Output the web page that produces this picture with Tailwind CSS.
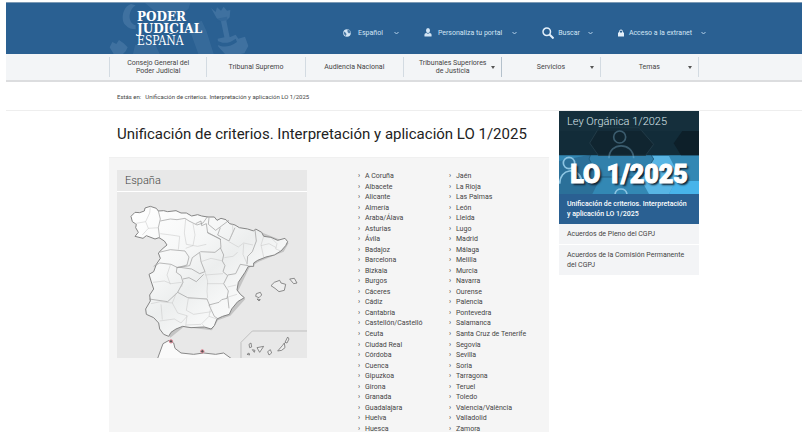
<!DOCTYPE html>
<html lang="es">
<head>
    <meta charset="UTF-8">
    <meta name="viewport" content="width=device-width, initial-scale=1.0">
    <title>Unificación de criterios. Interpretación y aplicación LO 1/2025</title>
    <script src="https://cdn.jsdelivr.net/npm/@tailwindcss/browser@4"></script>
</head>
<body class="bg-white font-[Roboto,sans-serif] text-[#444] h-screen overflow-hidden">
    <div class="flex flex-col h-full pl-[6px] pt-[2px]">

        <!-- Header -->
        <header class="shrink-0 bg-[#2a6092] border-t border-[#7c9ab5] overflow-hidden">
            <div class="relative w-full max-w-[590px] mx-auto h-[51px] flex items-center">
                <svg class="absolute left-0 top-0 w-[140px] h-[51px]" viewBox="12 9 420 153" fill="#4b7ba8" opacity=".65">
                    <path d="M78 12C52 20 46 62 62 76c8 10 18 12 30 12v-12C78 72 72 58 74 44c2-12 8-22 18-28z"/>
                    <path d="M120 9h136l-6 18-26 18-20 4-20 26-12-2 8-30-34-12z" opacity=".6"/>
                    <path d="M318 24l14 12 4-14 12 10 8-12 10 12 10-2-2 22-10 10 10 50 18-8 8 12 20-6 10 28-12 22-22 4-36-2-20-22-2-24 20-4-10-48-12-8z"/>
                    <path d="M14 142l8-16 12 6 8-12 14 10 12 12-6 12-8 8H26z"/>
                    <path d="M84 162l6-26 30-8 30 4 14 30z" opacity=".6"/>
                    <path d="M250 78l40-16 14 30 22 70h-46z" opacity=".6"/>
                    <path d="M334 120c16 12 38 12 58-4l4 10c-22 16-44 18-62 6z" fill="#2a6092"/>
                    <path d="M334 56l32-6 2 10-32 6z" fill="#2a6092" opacity=".5"/>
                </svg>
                <a href="#" class="relative shrink-0 ml-[28px] w-[206px] font-['DejaVu_Serif',serif] text-[12px] leading-[12px] text-white">
                    <span class="block font-bold">PODER</span>
                    <span class="block font-bold">JUDICIAL</span>
                    <span class="block font-['DejaVu_Serif_Condensed','DejaVu_Serif',serif]">ESPAÑA</span>
                </a>
                <div class="flex items-center gap-[25px] pt-[8px] text-[7px] leading-[10px] text-[#d3e5f5] whitespace-nowrap">
                    <button class="flex items-center gap-[7px]">
                        <svg class="w-[8px] h-[8px]" viewBox="0 0 16 16"><circle cx="8" cy="8" r="7.5" fill="#d3e5f5"/><path d="M9 1l5 2 1 4-3 2-3-3zM2 5l4 3 1 3-2 3-3-4z" fill="#2a6092" opacity=".8"/></svg>
                        Español
                        <svg class="w-[5px] h-[4px] ml-1" viewBox="0 0 10 8"><path d="M1 2l4 4 4-4" fill="none" stroke="#b4d0e8" stroke-width="2"/></svg>
                    </button>
                    <button class="flex items-center gap-[6px]">
                        <svg class="w-[8px] h-[9px]" viewBox="0 0 16 18" fill="#d3e5f5"><ellipse cx="8" cy="5" rx="4" ry="5"/><path d="M1 17c-1-5 1-7 4-7 2 2 4 2 6 0 3 0 5 2 4 7z"/></svg>
                        Personaliza tu portal
                        <svg class="w-[5px] h-[4px] ml-1" viewBox="0 0 10 8"><path d="M1 2l4 4 4-4" fill="none" stroke="#b4d0e8" stroke-width="2"/></svg>
                    </button>
                    <button class="flex items-center gap-[4px]">
                        <svg class="w-[12px] h-[12px]" viewBox="0 0 24 24" fill="none" stroke="#e3f0fb" stroke-width="3"><circle cx="9.500" cy="9.500" r="7.500"/><path d="M15 15l8 8" stroke-width="4"/></svg>
                        Buscar
                        <svg class="w-[5px] h-[4px] ml-1" viewBox="0 0 10 8"><path d="M1 2l4 4 4-4" fill="none" stroke="#b4d0e8" stroke-width="2"/></svg>
                    </button>
                    <button class="flex items-center gap-[5px]">
                        <svg class="w-[6px] h-[8px]" viewBox="0 0 12 16"><path d="M3 8V5a3 3 0 0 1 6 0v3" fill="none" stroke="#e3f0fb" stroke-width="2"/><path d="M0 7h12v8H0z" fill="#e3f0fb"/></svg>
                        Acceso a la extranet
                        <svg class="w-[5px] h-[4px] ml-1" viewBox="0 0 10 8"><path d="M1 2l4 4 4-4" fill="none" stroke="#b4d0e8" stroke-width="2"/></svg>
                    </button>
                </div>
            </div>
        </header>

        <!-- Main menu -->
        <nav class="shrink-0 bg-[#f3f5f7] border-b-2 border-[#dcdddf]">
            <div class="w-full max-w-[590px] mx-auto h-[26px] py-[3px] grid grid-cols-6 text-[7px] leading-[8px] text-center">
                <a href="#" class="flex items-center justify-center px-2 border-x border-[#d3dbe2]">Consejo General del<br>Poder Judicial</a>
                <a href="#" class="flex items-center justify-center px-2 border-r border-[#d3dbe2]">Tribunal Supremo</a>
                <a href="#" class="flex items-center justify-center px-2 border-r border-[#d3dbe2]">Audiencia Nacional</a>
                <a href="#" class="relative flex items-center justify-center border-r border-[#b4c1cc]">Tribunales Superiores<br>de Justicia
                    <span class="absolute right-[6px] border-x-2 border-t-3 border-x-transparent border-t-[#555]"></span></a>
                <a href="#" class="relative flex items-center justify-center border-r border-[#d3dbe2]">Servicios
                    <span class="absolute right-[6px] border-x-2 border-t-3 border-x-transparent border-t-[#555]"></span></a>
                <a href="#" class="relative flex items-center justify-center border-r border-[#d3dbe2]">Temas
                    <span class="absolute right-[6px] border-x-2 border-t-3 border-x-transparent border-t-[#555]"></span></a>
            </div>
        </nav>

        <!-- Breadcrumb -->
        <div class="shrink-0 border-b border-[#eee]">
            <div class="w-full max-w-[590px] mx-auto h-[28px] px-2 flex items-center gap-1 text-[6px] leading-[8px] pt-[2px]">
                <span>Estás en:</span>
                <span>Unificación de criterios. Interpretación y aplicación LO 1/2025</span>
            </div>
        </div>

        <div class="grow min-h-0 w-full max-w-[590px] mx-auto flex gap-[10px]">
            <main class="grow flex flex-col">
                <h1 class="px-2 pt-[13px] pb-[13px] text-[15px] leading-[20px] text-[#222] whitespace-nowrap">Unificación de criterios. Interpretación y aplicación LO 1/2025</h1>
                <div class="grow bg-[#f5f5f5] border-t border-[#f0f0f0] pl-2 pt-[12px] flex items-start">
                    <!-- Map -->
                    <section class="w-[190px] bg-[#e8e8e8]">
                        <h2 class="h-[22px] px-2 border-b border-white text-[11px] leading-[22px] font-light text-[#444]">España</h2>
                        <svg class="block w-full" viewBox="8 -9 570 499" fill="none" stroke-linejoin="round">
                            <defs>
                                <linearGradient id="land" x1="0" y1="0" x2="1" y2="1">
                                    <stop offset="0" stop-color="#fff"/>
                                    <stop offset=".35" stop-color="#f6f7f7"/>
                                    <stop offset=".5" stop-color="#eceeee"/>
                                    <stop offset=".65" stop-color="#f6f7f7"/>
                                    <stop offset="1" stop-color="#fff"/>
                                </linearGradient>
                            </defs>
                            <path fill="#c4c4c4" transform="translate(3 4)" d="M422 102L520 140 505 166 430 196 402 214 368 285 390 308 345 358 308 372 290 402 205 392 165 424 133 384 200 300z"/>
                            <path fill="url(#land)" stroke="#858585" stroke-width="3" d="M50 64L62 52 76 53 90 48 92 39 108 34 126 40 132 48 148 47 160 50 185 47 200 54 216 54 232 63 250 59 262 63 280 66 300 66 308 76 320 70 335 74 346 86 362 90 375 98 400 102 418 108 424 102 442 112 448 124 470 127 490 136 512 130 520 140 514 152 500 168 480 180 455 186 430 196 418 204 418 214 402 214 392 232 372 262 368 285 378 298 390 308 370 320 352 342 345 358 325 364 308 372 300 392 290 402 270 396 230 398 205 394 185 402 170 412 163 424 148 418 136 402 133 384 118 368 96 358 94 342 108 318 106 300 118 282 110 258 104 238 118 230 126 208 138 190 132 174 146 160 158 150 150 138 134 128 122 132 96 122 86 130 62 124 72 112 64 98 66 88 54 80z"/>
                            <path stroke="#999" stroke-width="2" d="M132 48l6 24-6 26 4 30M138 78l30-6 20 2 24-4 12 8 24 12 18-6 14-20M276 86l-14 6-2-14-16 8M284 68l-2 20 22 18 16-12 24-18M276 86l4 28 38 18 2 26-18 14-44-2M318 98l-8 22 34 18 18-40M280 112l40 22M318 158l10 22-4 18 8 14-6 18 14 12M422 104l4 34-12 32-14 14-2 24M340 240l24-4 14-28 24 4M340 242l-12 24 14 22-4 22-16 4-8 8-30 8 16 34 12 8M340 304l4 36M134 172l34-8 44 4 12 18-6 24-28 8-20-10-34-4-18 10M188 216l-2 16 14 10 6 20-16 30-30 28-56-8M190 292l30 16 58 4 8 20M256 172l-22 16-8 24-38 6M256 172l4 28 12 30-16 6-24-14-42-6M206 252l18-4 22 12 22-22"/>
                            <path stroke="#c4c4c4" stroke-width="1.500" d="M60 86l34-6 12-26 2-18M94 80l8 20 32-2M102 100l-18 20M138 116l32 4 26 4-4 40M214 72l-4 42 6 34 34 6 26-6M236 86l6 34-6 32-22 8M354 84l2 26-12 28M344 140l28 16 16-12 28 6M388 146l-2 32 12 28M330 188l26-4 14-12M448 124l-8 26 8 36M470 128l18 18-4 16 16 6M440 152l24-6 22 12M260 200l30-10 36 8M272 230l8 28-2 32 2 20M272 240l54-4M278 266h50M116 262l34-4 20 8 32-4M168 210l-10 30 10 28M206 254l-4 22M278 312l-56-2-6 36 22 12 54-8M186 294l-12 30-36-4-28 6M174 324l16 30 28 8-4 32M136 378l44-6 20 12 20-22M290 334l-6 30-24 24-44 2M284 364l24 8M264 388l8 8M140 328l4 46M340 276l26-6M342 306l26-8"/>
                            <g stroke="#777" stroke-width="2.500" fill="#eee">
                                <path d="M470 272l10-10 16-6 4 8 14 4-4 18-16 4-12-10zM526 252l14-2 8 14-10 2zM426 296l12-4 4 8-8 8-10-4zM428 312l10 2-4 4z"/>
                                <path d="M404 448l6-4 2 12-6 2zM398 478l6-4 2 6zM414 464l8 2-2 6zM428 458l20-4-12 18zM460 470l8-6 4 10-8 6zM490 468l14-16 6-8 2 14-10 8zM512 442l8-16 4 6-6 12z"/>
                            </g>
                            <path fill="#fafafa" d="M130 490l16-44 18-10 14 8 4 16 18 14 38 4 30-4 36 4 24-4 22 16z"/>
                            <path stroke="#888" stroke-width="3" d="M130 490l16-44 18-10 14 8 4 16 18 14 38 4 30-4 36 4 24-4 22 16"/>
                            <path stroke="#aaa" stroke-width="2" d="M380 490v-48l34-34h164"/>
                            <g fill="#555" stroke="#e48e9c" stroke-width="3"><circle cx="170" cy="439" r="5"/><circle cx="264" cy="469" r="5"/></g>
                        </svg>
                    </section>

                    <!-- Provinces, filled in by the script below -->
                    <div class="ml-[51px] mt-[1px] grid grid-cols-[91px_auto] h-[263px] text-[7px] leading-[10px] whitespace-nowrap">
                        <ul id="listA" class="flex flex-col justify-between"></ul>
                        <ul id="listB" class="flex flex-col justify-between"></ul>
                    </div>
                </div>
            </main>

            <!-- Sidebar -->
            <aside class="shrink-0 w-[140px] text-[7px] leading-[10px]">
                <div class="relative h-[83px] bg-[#3388b4] overflow-hidden">
                    <svg class="absolute inset-0 w-full h-full" viewBox="0 0 420 249" preserveAspectRatio="none">
                        <path d="M270 135h60l30 60-30 54h-60l-30-54z" fill="#58b5e4"/>
                        <path d="M350 210h70v39h-90z" fill="#48b4ea"/>
                        <path d="M0 150l100-20 30 60-30 59H0z" fill="#2b7099"/>
                        <path d="M110 90h140l34 54-34 54H120l-30-54z" fill="#3180ab" stroke="#225f82" stroke-width="3"/>
                        <path d="M0 0h420v133H0z" fill="#122c39"/>
                        <path d="M120 50h120l44 50-24 33H118L92 96z" fill="#102530" stroke="#223b48" stroke-width="3"/>
                        <path d="M370 60h50v73h-54l-22-36z" fill="#0d1f29"/>
                        <path d="M0 0h420v60H0z" fill="#17323f" opacity=".6"/>
                        <g fill="none" stroke="#8cc4e2" stroke-width="5">
                            <g opacity=".35"><circle cx="182" cy="78" r="18"/><path d="M150 142c0-50 72-50 74 0"/></g>
                            <circle cx="30" cy="156" r="17"/><path d="M2 218c0-46 56-52 66-10M168 249c4-20 32-20 36 0"/>
                        </g>
                    </svg>
                    <h2 class="relative px-2 pt-[3px] text-[11px] leading-[16px] font-light text-[#dbe6eb]">Ley Orgánica 1/2025</h2>
                    <p class="relative mt-[30px] text-center whitespace-nowrap font-black text-[25px] leading-[30px] text-white text-shadow-[2px_2px_2px_#123] [-webkit-text-stroke:1px_white]">LO 1/2025</p>
                </div>
                <a href="#" class="block bg-[#2a6092] px-2 py-[5px] text-white font-medium">Unificación de criterios. Interpretación<br>y aplicación LO 1/2025</a>
                <a href="#" class="block bg-[#f3f4f6] px-2 py-[5px] border-b border-white">Acuerdos de Pleno del CGPJ</a>
                <a href="#" class="block bg-[#f3f4f6] px-2 py-[5px]">Acuerdos de la Comisión Permanente<br>del CGPJ</a>
            </aside>
        </div>
    </div>

    <script>
        const listA = ['A Coruña', 'Albacete', 'Alicante', 'Almería', 'Araba/Álava', 'Asturias', 'Ávila', 'Badajoz', 'Barcelona', 'Bizkaia', 'Burgos', 'Cáceres', 'Cádiz', 'Cantabria', 'Castellón/Castelló', 'Ceuta', 'Ciudad Real', 'Córdoba', 'Cuenca', 'Gipuzkoa', 'Girona', 'Granada', 'Guadalajara', 'Huelva', 'Huesca'];
        const listB = ['Jaén', 'La Rioja', 'Las Palmas', 'León', 'Lleida', 'Lugo', 'Madrid', 'Málaga', 'Melilla', 'Murcia', 'Navarra', 'Ourense', 'Palencia', 'Pontevedra', 'Salamanca', 'Santa Cruz de Tenerife', 'Segovia', 'Sevilla', 'Soria', 'Tarragona', 'Teruel', 'Toledo', 'Valencia/València', 'Valladolid', 'Zamora'];

        function renderList(id, names) {
            document.getElementById(id).innerHTML = names.map(name => `
                <li><a href="#" class="flex gap-1"><span class="w-[3px]">›</span>${name}</a></li>
            `).join('');
        }

        renderList('listA', listA);
        renderList('listB', listB);
    </script>
</body>
</html>
